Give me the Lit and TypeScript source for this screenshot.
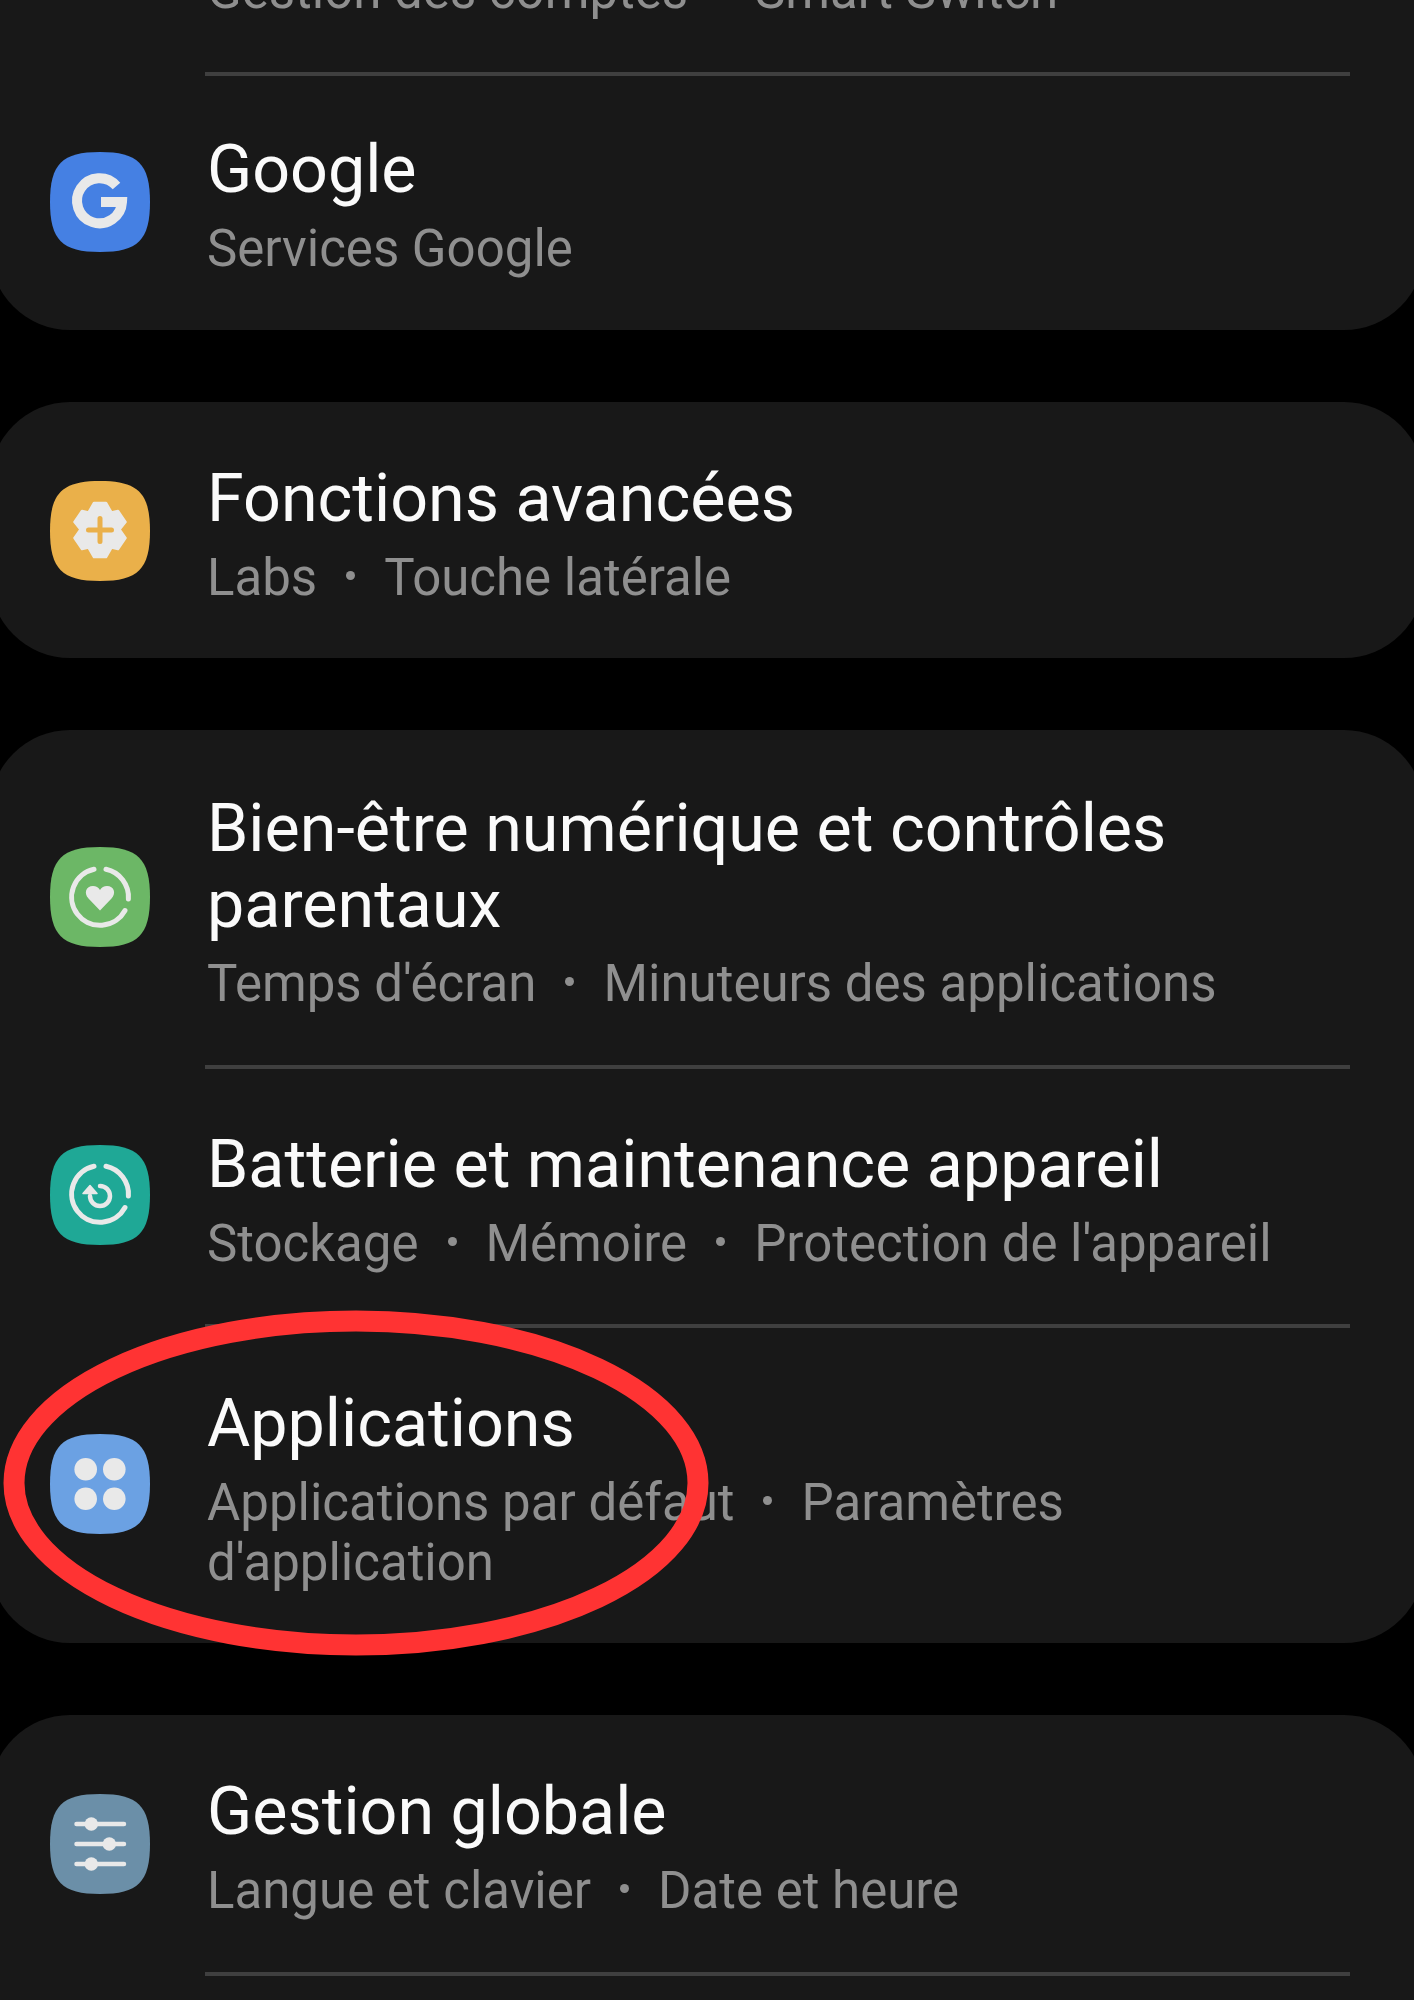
import { LitElement, html, svg, css, SVGTemplateResult } from 'lit';
import { customElement } from 'lit/decorators.js';

interface SettingRow {
  title?: string;
  parts: string[];
  color?: string;
  glyph?: SVGTemplateResult;
}

const INK = '#e9e9e9';

const GLYPH_GOOGLE = svg`
  <path d="M66.5 34 A22.5 22.5 0 1 0 72 50 H51" fill="none" stroke=${INK} stroke-width="10" />
`;

const GLYPH_GEAR = svg`
  <path
    d="M44 22 H56 L61.5 31.5 L68 30 L75.5 41 L69.5 48.5 L75.5 57 L68 68 L61.5 66.5 L56 76 H44 L38.5 66.5 L32 68 L24.5 57 L30.5 48.5 L24.5 41 L32 30 L38.5 31.5 Z"
    fill=${INK}
    stroke=${INK}
    stroke-width="2.5"
    stroke-linejoin="round"
  />
  <path d="M38.5 49 H61.5 M50 37.5 V60.5" stroke="#eab04a" stroke-width="5" stroke-linecap="round" />
`;

const GLYPH_WELLBEING = svg`
  <g fill="none" stroke=${INK} stroke-width="5" stroke-linecap="round">
    <path d="M56 22.2 A28.4 28.4 0 0 1 78.4 52" />
    <path d="M75 63.5 A28.4 28.4 0 1 1 44 22.2" />
  </g>
  <path
    d="M50 63.5 L38.5 51.5 C33.5 46 36 39 43 39 C46 39 48.5 40.5 50 43 C51.5 40.5 54 39 57 39 C64 39 66.5 46 61.5 51.5 Z"
    fill=${INK}
  />
`;

const GLYPH_BATTERY = svg`
  <g fill="none" stroke=${INK} stroke-width="5" stroke-linecap="round">
    <path d="M56 21.2 A28.4 28.4 0 0 1 78.4 51" />
    <path d="M75 62.5 A28.4 28.4 0 1 1 44 21.2" />
    <path d="M50 41 A10 10 0 1 1 40 51" stroke-width="4.5" />
  </g>
  <path d="M40 40.5 L33 48.5 H47 Z" fill=${INK} stroke=${INK} stroke-width="1.5" stroke-linejoin="round" />
`;

const GLYPH_APPS = svg`
  <g fill=${INK}>
    <circle cx="35.7" cy="35.3" r="11.3" />
    <circle cx="64.3" cy="35.3" r="11.3" />
    <circle cx="35.7" cy="64.7" r="11.3" />
    <circle cx="64.3" cy="64.7" r="11.3" />
  </g>
`;

const GLYPH_SLIDERS = svg`
  <path d="M26.5 30 H74 M26.5 50 H74 M26.5 70 H74" stroke=${INK} stroke-width="4.5" stroke-linecap="round" />
  <g fill=${INK}>
    <circle cx="41.3" cy="30" r="6.7" />
    <circle cx="59.3" cy="50" r="6.7" />
    <circle cx="41.3" cy="70" r="6.7" />
  </g>
`;

const CARDS: SettingRow[][] = [
  [
    { parts: ['Gestion des comptes', 'Smart Switch'] },
    { title: 'Google', parts: ['Services Google'], color: '#4580e3', glyph: GLYPH_GOOGLE },
  ],
  [
    {
      title: 'Fonctions avancées',
      parts: ['Labs', 'Touche latérale'],
      color: '#eab04a',
      glyph: GLYPH_GEAR,
    },
  ],
  [
    {
      title: 'Bien-être numérique et contrôles parentaux',
      parts: ["Temps d'écran", 'Minuteurs des applications'],
      color: '#6cb766',
      glyph: GLYPH_WELLBEING,
    },
    {
      title: 'Batterie et maintenance appareil',
      parts: ['Stockage', 'Mémoire', "Protection de l'appareil"],
      color: '#1fa896',
      glyph: GLYPH_BATTERY,
    },
    {
      title: 'Applications',
      parts: ['Applications par défaut', "Paramètres d'application"],
      color: '#6ba1e3',
      glyph: GLYPH_APPS,
    },
  ],
  [
    {
      title: 'Gestion globale',
      parts: ['Langue et clavier', 'Date et heure'],
      color: '#6b8fa8',
      glyph: GLYPH_SLIDERS,
    },
  ],
];

@customElement('app-root')
export class AppRoot extends LitElement {
  static styles = css`
    :host {
      display: block;
      width: 1414px;
      height: 2000px;
      background: #000;
      overflow: hidden;
      position: relative;
      font-family: Roboto, 'Liberation Sans', sans-serif;
    }
    .list {
      display: flex;
      flex-direction: column;
      gap: 72px;
      margin: -94px -10px 0;
    }
    .card {
      background: #181818;
      border-radius: 80px;
    }
    .card:last-child {
      padding-bottom: 80px;
    }
    .row {
      display: flex;
      align-items: center;
      gap: 57px;
      padding: 57px 64px 50px 60px;
    }
    .row:first-of-type {
      padding-top: 60px;
      padding-bottom: 51px;
    }
    .card:nth-child(1) .row {
      padding-top: 55px;
      padding-bottom: 51px;
    }
    .card:nth-child(2) .row {
      padding-top: 58px;
      padding-bottom: 50px;
    }
    .card:nth-child(4) .row {
      padding-top: 58px;
      padding-bottom: 51px;
    }
    .row--clipped {
      padding-left: 217px;
    }
    .icon {
      flex: none;
      width: 100px;
      height: 100px;
      margin-top: -7px;
      display: block;
    }
    .card:nth-child(3) .icon {
      margin-top: -10px;
    }
    .body {
      flex: 1;
      min-width: 0;
    }
    .title {
      font-size: 66.4px;
      line-height: 76px;
      color: #fafafa;
      margin-bottom: 12px;
    }
    .sub {
      font-size: 51px;
      line-height: 60px;
      color: #8f8f8f;
    }
    .dot {
      display: inline-block;
      width: 9px;
      height: 9px;
      border-radius: 50%;
      background: #8f8f8f;
      margin: 0 29px;
      vertical-align: 15px;
    }
    .divider {
      height: 4px;
      margin: 0 74px 0 215px;
      background: #3f3f3f;
    }
    .mark {
      position: absolute;
      left: 0;
      top: 0;
      pointer-events: none;
    }
  `;

  private renderRow(row: SettingRow) {
    return html`
      <div class="row ${row.glyph ? '' : 'row--clipped'}">
        ${row.glyph
          ? html`<svg class="icon" viewBox="0 0 100 100" aria-hidden="true">
              <path
                d="M50 0 C88 0 100 12 100 50 C100 88 88 100 50 100 C12 100 0 88 0 50 C0 12 12 0 50 0 Z"
                fill=${row.color ?? '#888'}
              />
              ${row.glyph}
            </svg>`
          : null}
        <div class="body">
          ${row.title ? html`<div class="title">${row.title}</div>` : null}
          <div class="sub">
            ${row.parts.map((p, i) => html`${i > 0 ? html`<span class="dot"></span>` : null}${p}`)}
          </div>
        </div>
      </div>
    `;
  }

  render() {
    return html`
      <div class="list">
        ${CARDS.map(
          (rows, c) => html`
            <section class="card">
              ${rows.map(
                (row, i) => html`
                  ${i > 0 ? html`<div class="divider"></div>` : null}
                  ${this.renderRow(row)}
                `
              )}
              ${c === CARDS.length - 1 ? html`<div class="divider"></div>` : null}
            </section>
          `
        )}
      </div>
      <svg class="mark" width="1414" height="2000" aria-hidden="true">
        <ellipse cx="356" cy="1483" rx="342" ry="162" fill="none" stroke="#ff3333" stroke-width="21" />
      </svg>
    `;
  }
}
